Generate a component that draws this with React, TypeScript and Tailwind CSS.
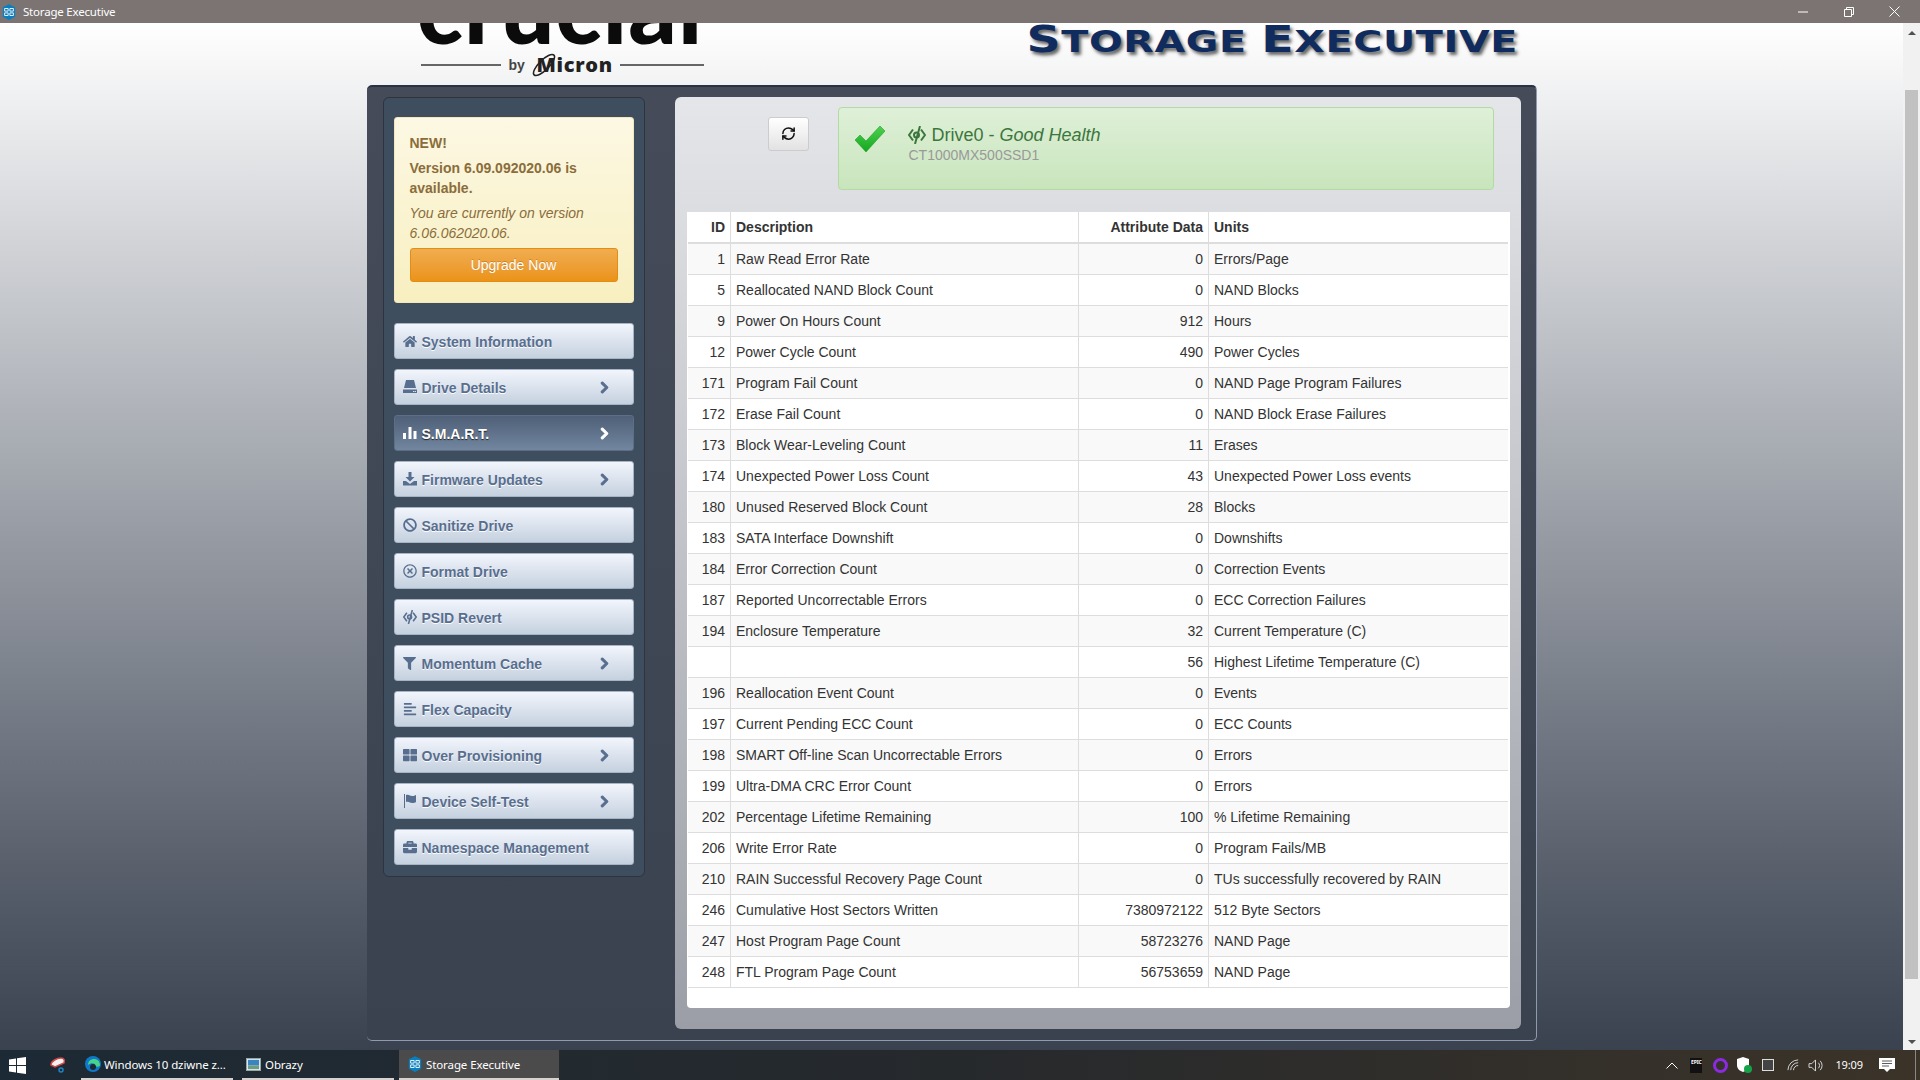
import React from "react";
import { FaHome, FaChevronRight, FaBan, FaRegTimesCircle, FaFilter, FaAlignLeft, FaThLarge, FaBriefcase } from "react-icons/fa";
import { RefreshCw } from "lucide-react";

const rows = [
  ["1", "Raw Read Error Rate", "0", "Errors/Page"],
  ["5", "Reallocated NAND Block Count", "0", "NAND Blocks"],
  ["9", "Power On Hours Count", "912", "Hours"],
  ["12", "Power Cycle Count", "490", "Power Cycles"],
  ["171", "Program Fail Count", "0", "NAND Page Program Failures"],
  ["172", "Erase Fail Count", "0", "NAND Block Erase Failures"],
  ["173", "Block Wear-Leveling Count", "11", "Erases"],
  ["174", "Unexpected Power Loss Count", "43", "Unexpected Power Loss events"],
  ["180", "Unused Reserved Block Count", "28", "Blocks"],
  ["183", "SATA Interface Downshift", "0", "Downshifts"],
  ["184", "Error Correction Count", "0", "Correction Events"],
  ["187", "Reported Uncorrectable Errors", "0", "ECC Correction Failures"],
  ["194", "Enclosure Temperature", "32", "Current Temperature (C)"],
  ["", "", "56", "Highest Lifetime Temperature (C)"],
  ["196", "Reallocation Event Count", "0", "Events"],
  ["197", "Current Pending ECC Count", "0", "ECC Counts"],
  ["198", "SMART Off-line Scan Uncorrectable Errors", "0", "Errors"],
  ["199", "Ultra-DMA CRC Error Count", "0", "Errors"],
  ["202", "Percentage Lifetime Remaining", "100", "% Lifetime Remaining"],
  ["206", "Write Error Rate", "0", "Program Fails/MB"],
  ["210", "RAIN Successful Recovery Page Count", "0", "TUs successfully recovered by RAIN"],
  ["246", "Cumulative Host Sectors Written", "7380972122", "512 Byte Sectors"],
  ["247", "Host Program Page Count", "58723276", "NAND Page"],
  ["248", "FTL Program Page Count", "56753659", "NAND Page"],
];

const HddIcon = () => (
  <svg viewBox="0 0 14 14" className="w-[14px] h-[14px]" fill="currentColor">
    <path d="M3 0h8l2 8H1z" />
    <path d="M0 9.500h14V13H0zM10 11v1h1.500v-1zM12 11v1h1v-1z" fillRule="evenodd" />
  </svg>
);
const StatsIcon = () => (
  <svg viewBox="0 0 14 14" className="w-[14px] h-[14px]" fill="currentColor">
    <path d="M0 7h3v6H0zM5.500 1h3v12h-3zM10.500 5h3v8h-3z" />
  </svg>
);
const DownloadIcon = () => (
  <svg viewBox="0 0 14 14" className="w-[14px] h-[14px]" fill="currentColor">
    <path d="M5.500 0h3v5h3L7 9.500 2.500 5h3zM0 9h3l4 3 4-3h3v4.500H0z" />
  </svg>
);
const EyeIcon = ({ size = 14 }: { size?: number }) => (
  <svg viewBox="0 0 18 18" width={size} height={size} fill="none" stroke="currentColor">
    <path d="M5 3.500 1 9l4 5.500" strokeWidth="2" />
    <path d="M13 3.500 17 9l-4 5.500" strokeWidth="2" />
    <circle cx="8.500" cy="9" r="2.500" strokeWidth="2" />
    <path d="M12 0 7 18" strokeWidth="2" />
  </svg>
);
const FlagIcon = () => (
  <svg viewBox="0 0 14 14" className="w-[14px] h-[14px]" fill="currentColor">
    <path d="M1 0h1v14H1zM3 1c3-1 4 1 6 1 2 0 3-.5 4-1v7c-1 .6-2 1-4 1-2 0-3-2-6-1z" />
  </svg>
);

const navItems = [
  { label: "System Information", icon: <FaHome size={15} />, arrow: false },
  { label: "Drive Details", icon: <HddIcon />, arrow: true },
  { label: "S.M.A.R.T.", icon: <StatsIcon />, arrow: true, active: true },
  { label: "Firmware Updates", icon: <DownloadIcon />, arrow: true },
  { label: "Sanitize Drive", icon: <FaBan size={14} />, arrow: false },
  { label: "Format Drive", icon: <FaRegTimesCircle size={14} />, arrow: false },
  { label: "PSID Revert", icon: <EyeIcon />, arrow: false },
  { label: "Momentum Cache", icon: <FaFilter size={13} />, arrow: true },
  { label: "Flex Capacity", icon: <FaAlignLeft size={14} />, arrow: false },
  { label: "Over Provisioning", icon: <FaThLarge size={14} />, arrow: true },
  { label: "Device Self-Test", icon: <FlagIcon />, arrow: true },
  { label: "Namespace Management", icon: <FaBriefcase size={14} />, arrow: false },
];

const AppLogo = () => (
  <svg viewBox="0 0 16 18" className="w-[14px] h-[16px]">
    <path d="M8 0l7 3.500v11L8 18l-7-3.500v-11z" fill="#0a7fc0" />
    <path d="M3 5h4v3H3zM9 5h4v3H9zM3 10h4v3H3zM9 10h4v3H9z" fill="none" stroke="#fff" strokeWidth="1" />
  </svg>
);

function TitleBar() {
  return (
    <div className="relative z-10 flex h-[23px] shrink-0 items-center bg-[#7b7473] pl-[2px] text-[11.5px] tracking-[-0.2px] text-white font-['Noto_Sans',sans-serif]">
      <AppLogo />
      <span className="ml-[7px]">Storage Executive</span>
      <div className="ml-auto flex items-center text-white">
        <svg viewBox="0 0 10 10" className="w-[10px] h-[10px] mr-[36px]"><path d="M0 5h10" stroke="#fff" /></svg>
        <svg viewBox="0 0 10 10" className="w-[10px] h-[10px] mr-[35px]" fill="none" stroke="#fff"><path d="M.5 2.500h7v7h-7zM2.500 2.500v-2h7v7h-2" /></svg>
        <svg viewBox="0 0 11 11" className="w-[11px] h-[11px] mr-[20px]" stroke="#fff"><path d="M.5.5l10 10M10.500.5l-10 10" /></svg>
      </div>
    </div>
  );
}

function Header() {
  return (
    <div className="flex h-[62px] shrink-0">
      <div className="ml-[54px] mt-[-8px] w-[285px] shrink-0">
        <div className="ml-[-6px] h-[27px] text-center font-['Lato',sans-serif] text-[95px] font-black leading-[0px] tracking-[1px] text-[#0b0b0b]">
          <span className="relative top-[-8px]">crucial</span>
        </div>
        <div className="mt-[11px] flex items-center text-[#444]">
          <div className="h-[2px] w-[80px] bg-[#666]" />
          <span className="ml-[8px] font-['Liberation_Sans',sans-serif] text-[14px] font-bold">by</span>
          <div className="relative ml-[5px] flex h-[24px] w-[83px] items-center justify-end">
            <svg viewBox="0 0 30 24" className="absolute left-0 top-0 w-[30px] h-[24px]" fill="none" stroke="#222">
              <ellipse cx="14" cy="12" rx="14" ry="5" transform="rotate(-45 14 12)" strokeWidth="1.600" />
            </svg>
            <span className="font-['Open_Sans',sans-serif] text-[20px] font-extrabold leading-none tracking-[0.7px] text-[#222]">Micron</span>
          </div>
          <div className="ml-[7px] h-[2px] w-[84px] bg-[#666]" />
        </div>
      </div>
      <div className="ml-auto mr-[18px] mt-[-2px] origin-right scale-x-[1.28] whitespace-nowrap font-['DejaVu_Sans',sans-serif] font-bold leading-none text-[#102c5f] [text-shadow:2px_3px_3px_#666] text-[31px] tracking-[0.5px]">
        <span className="text-[37px]">S</span>TORAGE <span className="text-[37px]">E</span>XECUTIVE
      </div>
    </div>
  );
}

function Sidebar() {
  return (
    <div className="h-[780px] w-[262px] shrink-0 rounded-[6px] border border-[#2c3440] bg-[#3f4e5f] px-[10px] pt-[19px]">
      <div className="h-[186px] rounded-[3px] border border-[#f3e7bd] bg-linear-to-b from-[#fcf8e3] to-[#f8efc0] px-[15px] pt-[15px] text-[14px] leading-[20px] text-[#8a6d3b]">
        <p className="font-bold">NEW!</p>
        <p className="mt-[5px] font-bold">Version 6.09.092020.06 is available.</p>
        <p className="mt-[5px] italic">You are currently on version 6.06.062020.06.</p>
        <button className="mt-[5px] h-[34px] w-[208px] rounded-[3px] border border-[#e38d13] bg-linear-to-b from-[#f0ad4e] to-[#eb9316] text-white [text-shadow:0_-1px_0_rgba(0,0,0,0.2)]">
          Upgrade Now
        </button>
      </div>
      <div className="mt-[20px] flex flex-col gap-[10px]">
        {navItems.map((item) => (
          <div
            key={item.label}
            className={
              item.active
                ? "flex h-[36px] items-center rounded-[3px] border border-[#5d6f86] bg-linear-to-b from-[#4f6078] to-[#72869f] pl-[8px] pr-[22px] text-[14px] font-bold text-white [text-shadow:0_1px_1px_#222]"
                : "flex h-[36px] items-center rounded-[3px] border border-[#a7b4c4] bg-linear-to-b from-[#f2f5fc] to-[#c5d1df] pl-[8px] pr-[22px] text-[14px] font-bold text-[#586e8f] [text-shadow:0_1px_0_#fff]"
            }
          >
            <span className="flex w-[14px] justify-center">{item.icon}</span>
            <span className="ml-[5px] pt-[2px]">{item.label}</span>
            {item.arrow && <FaChevronRight size={13} className="ml-auto stroke-[40px]" />}
          </div>
        ))}
      </div>
    </div>
  );
}

function HealthBar() {
  return (
    <div className="flex">
      <button className="ml-[93px] mt-[10px] flex h-[34px] w-[41px] items-center justify-center rounded-[3px] border border-[#ccc] bg-linear-to-b from-white to-[#e2e2e2] pb-px text-[#111]">
        <RefreshCw size={15} strokeWidth={2.4} />
      </button>
      <div className="ml-[29px] flex h-[83px] w-[656px] rounded-[4px] border border-[#b2dba1] bg-linear-to-b from-[#dff0d8] to-[#c8e5bc]">
        <svg viewBox="0 0 30 26" className="ml-[16px] mt-[18px] w-[30px] h-[26px]">
          <defs>
            <linearGradient id="tick" x1="0" y1="0" x2="0" y2="1">
              <stop offset="0" stopColor="#4fd04f" />
              <stop offset="1" stopColor="#12a81e" />
            </linearGradient>
          </defs>
          <path d="M0 14l5-5 6 6L25 0l5 5-19 21z" fill="url(#tick)" stroke="#149020" strokeWidth="0.5" />
        </svg>
        <div className="ml-[23px] mt-[13px]">
          <div className="flex items-center pt-px text-[18px] leading-[26px] text-[#3c763d]">
            <EyeIcon size={18} />
            <span className="ml-[6px]">Drive0 - <i>Good Health</i></span>
          </div>
          <div className="ml-px mt-[-3px] text-[14px] leading-[20px] text-[#999]">CT1000MX500SSD1</div>
        </div>
      </div>
    </div>
  );
}

function SmartTable() {
  return (
    <div className="ml-[12px] mr-[11px] mt-[22px] h-[796px] rounded-b-[4px] bg-white pl-px">
      <table className="w-[820px] table-fixed border-collapse text-[14px] text-[#333]">
        <colgroup>
          <col className="w-[43px]" />
          <col className="w-[348px]" />
          <col className="w-[130px]" />
          <col className="w-[299px]" />
        </colgroup>
        <thead>
          <tr className="h-[31px] border-b-2 border-[#ddd] font-bold">
            <th className="border-r border-[#ddd] pr-[5px] text-right">ID</th>
            <th className="border-r border-[#ddd] pl-[5px] text-left">Description</th>
            <th className="border-r border-[#ddd] pr-[5px] text-right">Attribute Data</th>
            <th className="pl-[5px] text-left">Units</th>
          </tr>
        </thead>
        <tbody>
          {rows.map((r, i) => (
            <tr key={i} className={i % 2 === 0 ? "h-[31px] border-b border-[#ddd] bg-[#f9f9f9]" : "h-[31px] border-b border-[#ddd] bg-white"}>
              <td className="border-r border-[#ddd] pr-[5px] pt-[2px] text-right">{r[0]}</td>
              <td className="border-r border-[#ddd] pl-[5px] pt-[2px]">{r[1]}</td>
              <td className="border-r border-[#ddd] pr-[5px] pt-[2px] text-right">{r[2]}</td>
              <td className="pl-[5px] pt-[2px]">{r[3]}</td>
            </tr>
          ))}
        </tbody>
      </table>
    </div>
  );
}

function Scrollbar() {
  return (
    <div className="flex w-[17px] shrink-0 flex-col items-center bg-[#f1f1f1]">
      <div className="mt-[8px] h-0 w-0 border-x-[4px] border-b-[4px] border-x-transparent border-b-[#505050]" />
      <div className="mt-[55px] h-[889px] w-[13px] bg-[#c1c1c1]" />
      <div className="mt-auto mb-[6px] h-0 w-0 border-x-[4px] border-t-[4px] border-x-transparent border-t-[#505050]" />
    </div>
  );
}

function TaskItem({ w, active, children }: { w: string; active?: boolean; children: React.ReactNode }) {
  return (
    <div className={w + (active ? " flex h-full items-center border-b-2 border-[#d6d2cf] bg-[#4c4b4b]" : " flex h-full items-center border-b-2 border-[#d6d2cf]")}>
      {children}
    </div>
  );
}

function Taskbar() {
  return (
    <div className="flex h-[30px] shrink-0 items-center bg-linear-to-r from-[#1c2a35] via-[#26292c] to-[#3b3328] text-[11.5px] tracking-[-0.1px] text-white font-['Noto_Sans',sans-serif]">
      <svg viewBox="0 0 17 17" className="ml-[9px] w-[17px] h-[17px]" fill="#fff">
        <path d="M0 2.500 7 1.500v6.500H0zM8 1.300 17 0v8H8zM0 9h7v6.500l-7-1zM8 9h9v8l-9-1.300z" />
      </svg>
      <svg viewBox="0 0 16 16" className="ml-[24px] mr-[15px] w-[16px] h-[16px]">
        <path d="M1 8C1 4 7 1 11 1c3 0 4 2 3 5l-9 4z" fill="#f2f2f2" stroke="#d04545" strokeWidth="1.500" />
        <circle cx="11" cy="13" r="2" fill="none" stroke="#1a84c8" strokeWidth="1.500" />
      </svg>
      <TaskItem w="w-[152px]">
        <svg viewBox="0 0 16 16" className="ml-[4px] w-[16px] h-[16px]">
          <circle cx="8" cy="8" r="8" fill="#0f78c8" />
          <path d="M3 9c0-4 3-6 6-6s6 2 6 6c0 2-3 2-5 1 1-3-4-4-7-1z" fill="#46d38c" />
          <circle cx="8" cy="11" r="3" fill="#1c2a35" />
        </svg>
        <span className="ml-[3px] whitespace-nowrap pt-[2px]">Windows 10 dziwne z...</span>
      </TaskItem>
      <div className="w-[9px]" />
      <TaskItem w="w-[152px]">
        <svg viewBox="0 0 16 14" className="ml-[4px] w-[15px] h-[13px]">
          <rect x="0.500" y="0.500" width="15" height="13" fill="#e5eef5" stroke="#9aa" />
          <rect x="2" y="2" width="12" height="6" fill="#3a85c0" />
          <rect x="2" y="8" width="12" height="4" fill="#6d9c80" />
        </svg>
        <span className="ml-[4px] pt-[2px]">Obrazy</span>
      </TaskItem>
      <div className="w-[5px]" />
      <TaskItem w="w-[160px]" active>
        <span className="ml-[9px] flex"><AppLogo /></span>
        <span className="ml-[4px] pt-[2px]">Storage Executive</span>
      </TaskItem>
      <div className="ml-auto flex h-full items-center">
        <svg viewBox="0 0 12 7" className="w-[12px] h-[7px]" fill="none" stroke="#fff"><path d="M.5 6.500 6 1l5.500 5.500" /></svg>
        <div className="ml-[12px] flex h-[15px] w-[12px] items-start justify-center bg-[#111] text-[5px] font-bold leading-[9px] text-white">EPIC</div>
        <div className="ml-[11px] h-[15px] w-[15px] rounded-full border-[3px] border-[#8a2be2]" />
        <svg viewBox="0 0 16 16" className="ml-[8px] w-[16px] h-[16px]">
          <path d="M7 0l6 2v6c0 4-3 6-6 7-3-1-6-3-6-7V2z" fill="#fff" />
          <circle cx="12" cy="12" r="4" fill="#15a34a" />
        </svg>
        <div className="ml-[10px] h-[12px] w-[12px] border border-[#ddd] bg-[#444]" />
        <svg viewBox="0 0 14 14" className="ml-[13px] w-[13px] h-[13px]" fill="none" stroke="#ddd"><path d="M1 12a11 11 0 0 1 11-11M4 12a8 8 0 0 1 8-8M7 12a5 5 0 0 1 5-5" /></svg>
        <svg viewBox="0 0 16 14" className="ml-[8px] w-[15px] h-[13px]" fill="none" stroke="#ddd"><path d="M1 5h3l4-4v12l-4-4H1zM11 4a4 4 0 0 1 0 6M13 2a7 7 0 0 1 0 10" /></svg>
        <span className="ml-[12px] text-[11px]">19:09</span>
        <svg viewBox="0 0 16 16" className="ml-[16px] w-[16px] h-[16px]" fill="#fff"><path d="M0 1h16v11h-5l-3 3-3-3H0z" /><path d="M3 4h10M3 6.500h10M3 9h7" stroke="#333" strokeWidth="0.800" /></svg>
        <div className="ml-[20px] mr-[4px] h-full w-px bg-[#888]" />
      </div>
    </div>
  );
}

export default function App() {
  return (
    <div className="flex h-screen flex-col overflow-hidden font-['Liberation_Sans',Arial,sans-serif]">
      <TitleBar />
      <div className="flex min-h-0 flex-1">
        <div className="min-w-0 flex-1 bg-linear-to-b from-white to-[#3a4250]">
          <div className="mx-auto w-[1170px]">
            <Header />
            <div className="flex h-[956px] rounded-[5px] border-t-2 border-r border-b border-[#2c3340] border-r-[#8f9ab0] border-b-[#8f9ab0] bg-linear-to-b from-[#454b59] to-[#3a4250] pl-[16px] pt-[10px]">
              <Sidebar />
              <div className="ml-[30px] h-[932px] w-[846px] rounded-[6px] bg-linear-to-b from-[#e5e6e9] to-[#9b9ea6] pt-[10px]">
                <HealthBar />
                <SmartTable />
              </div>
            </div>
          </div>
        </div>
        <Scrollbar />
      </div>
      <Taskbar />
    </div>
  );
}
